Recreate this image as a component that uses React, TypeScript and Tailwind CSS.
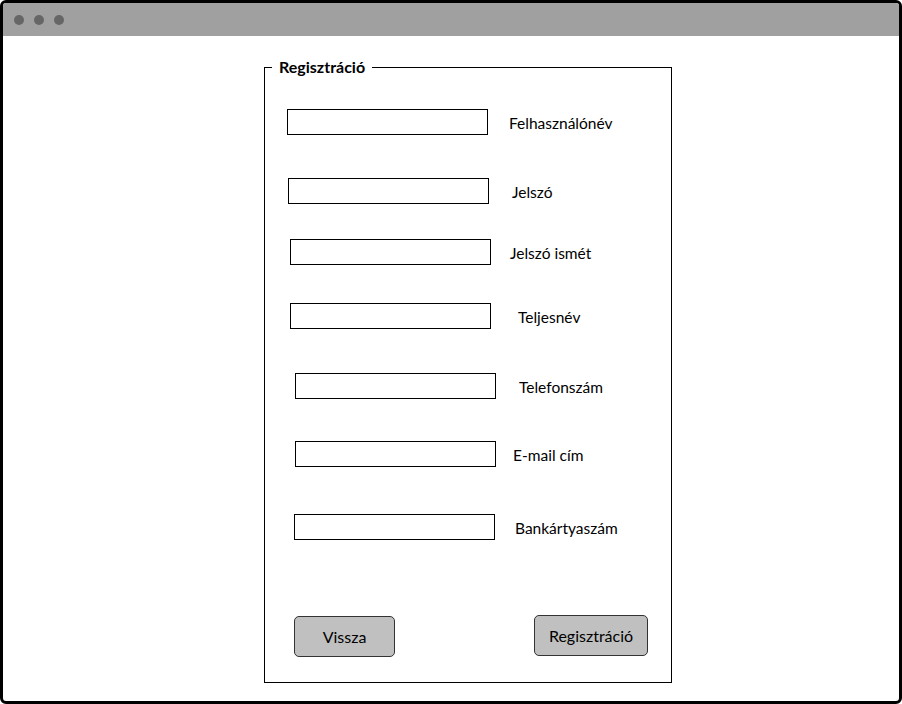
import React from "react";

const rows = [
  { label: "Felhasználónév", mt: "mt-[32px]", ml: "ml-[22px]", gap: "ml-[21px]" },
  { label: "Jelszó", mt: "mt-[43px]", ml: "ml-[23px]", gap: "ml-[23px]" },
  { label: "Jelszó ismét", mt: "mt-[35px]", ml: "ml-[25px]", gap: "ml-[19px]" },
  { label: "Teljesnév", mt: "mt-[38px]", ml: "ml-[25px]", gap: "ml-[27px]" },
  { label: "Telefonszám", mt: "mt-[44px]", ml: "ml-[30px]", gap: "ml-[23px]" },
  { label: "E-mail cím", mt: "mt-[42px]", ml: "ml-[30px]", gap: "ml-[17px]" },
  { label: "Bankártyaszám", mt: "mt-[47px]", ml: "ml-[29px]", gap: "ml-[20px]" },
];

export default function App() {
  return (
    <div
      className="w-[902px] h-[704px] bg-white text-black"
      style={{ fontFamily: "Lato, 'Open Sans', sans-serif" }}
    >
      <div className="w-full h-full border-[3px] border-black rounded-[6px] overflow-hidden flex flex-col">
        <div className="h-[33px] bg-[#a0a0a0] flex items-center gap-[10px] pl-[11px] shrink-0">
          <span className="w-[10px] h-[10px] rounded-full bg-[#666666]" />
          <span className="w-[10px] h-[10px] rounded-full bg-[#666666]" />
          <span className="w-[10px] h-[10px] rounded-full bg-[#666666]" />
        </div>
        <fieldset className="mt-[21px] ml-[261px] w-[408px] h-[626px] border border-black flex flex-col">
          <legend className="ml-[7px] px-[7px] text-[16px] leading-[20px] font-bold">
            Regisztráció
          </legend>
          {rows.map((r) => (
            <div key={r.label} className={`flex items-center ${r.mt} ${r.ml}`}>
              <div className="w-[201px] h-[26px] border border-black bg-white" />
              <span className={`${r.gap} text-[15.5px] leading-[20px] pt-[2px]`}>{r.label}</span>
            </div>
          ))}
          <div className="flex items-start justify-between mt-[75px] ml-[29px] mr-[23px]">
            <button className="mt-[1px] w-[101px] h-[41px] rounded-[5px] border border-[#333] bg-[#c0c0c0] text-[16px] pt-[1px]">
              Vissza
            </button>
            <button className="w-[114px] h-[41px] rounded-[5px] border border-[#333] bg-[#c0c0c0] text-[16px]">
              Regisztráció
            </button>
          </div>
        </fieldset>
      </div>
    </div>
  );
}
